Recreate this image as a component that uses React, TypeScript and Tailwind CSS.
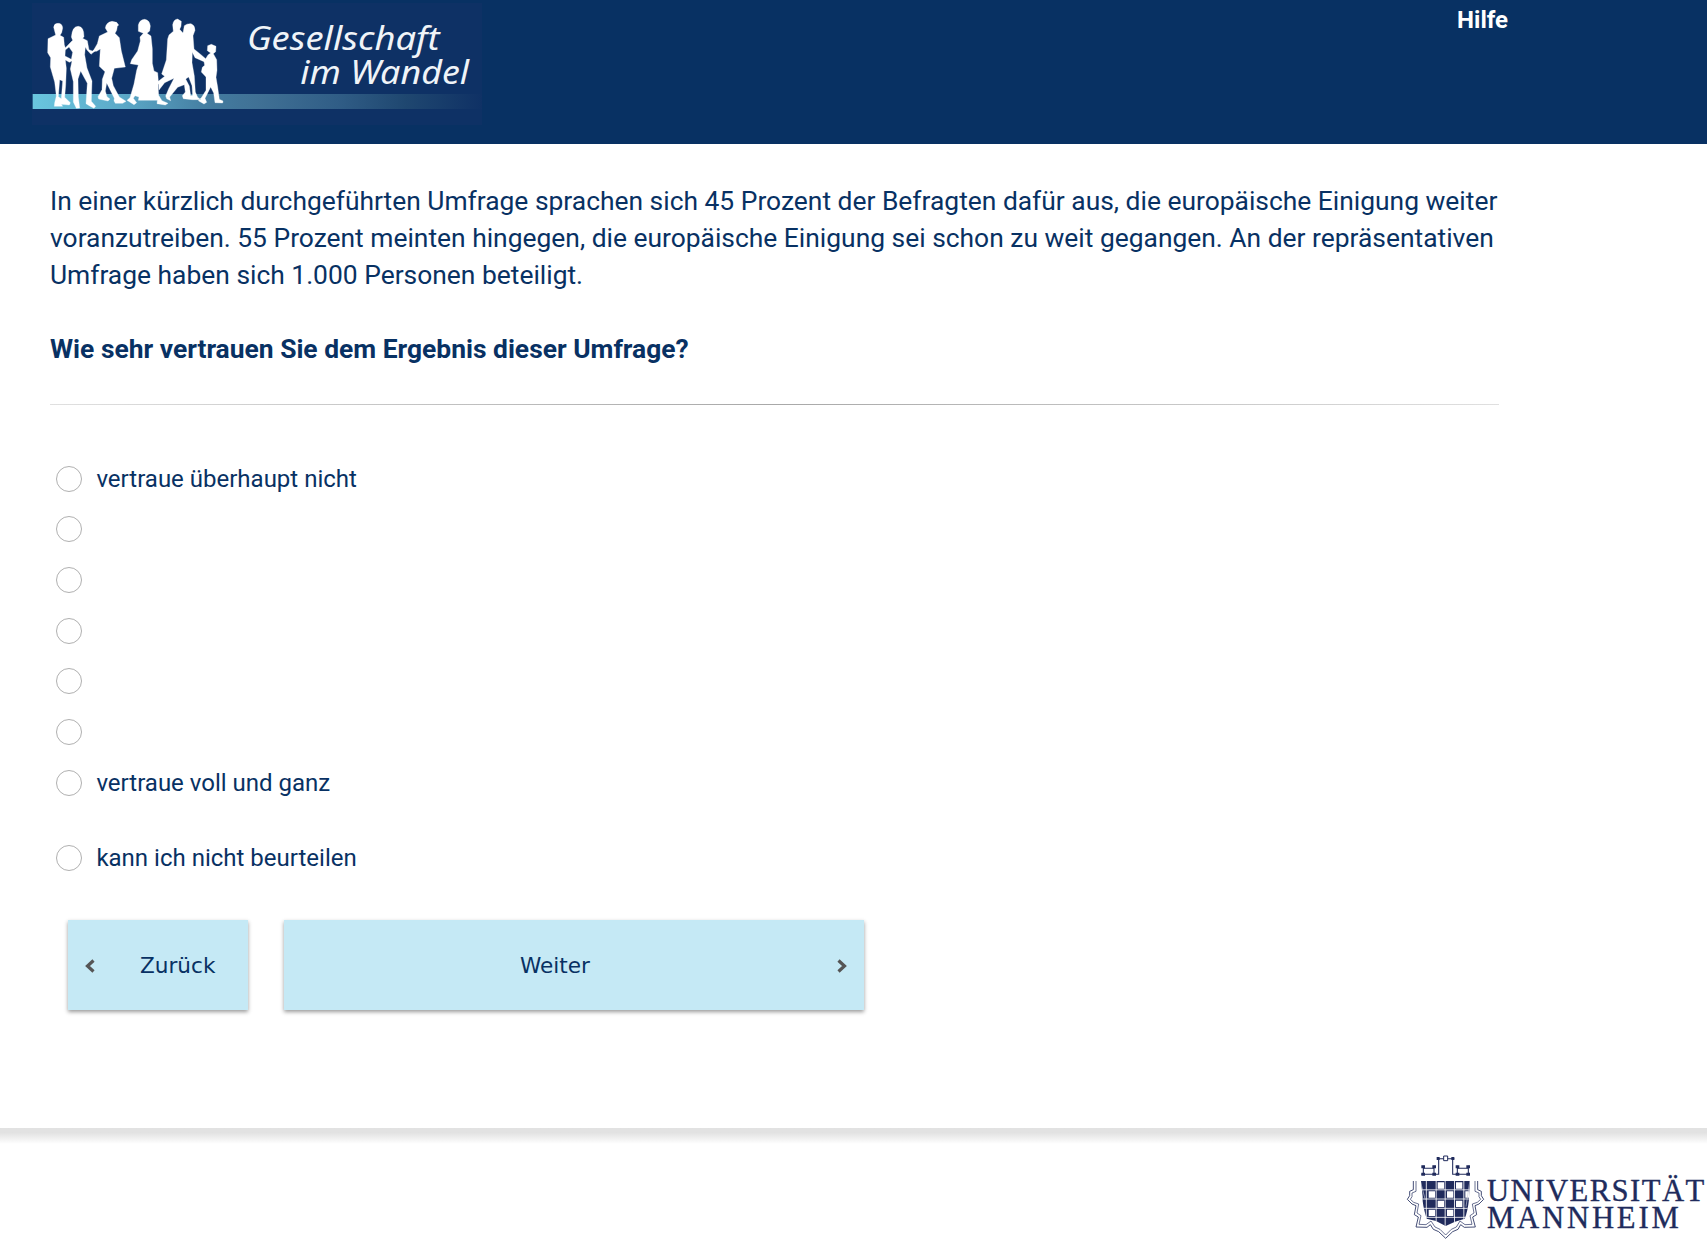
import React from "react";

const options = [
  "vertraue überhaupt nicht",
  "",
  "",
  "",
  "",
  "",
  "vertraue voll und ganz",
];

function SurveyLogo() {
  return (
    <svg
      className="block h-[122px] w-[450px] shrink-0"
      viewBox="36 9 1350 366"
      role="img"
      aria-label="Gesellschaft im Wandel"
    >
      <defs>
        <linearGradient id="band" x1="0" x2="1" y1="0" y2="0">
          <stop offset="0" stopColor="#69c6df" />
          <stop offset="0.2" stopColor="#5ca9c8" />
          <stop offset="0.4" stopColor="#437b9f" />
          <stop offset="0.5" stopColor="#407195" />
          <stop offset="0.68" stopColor="#305d86" />
          <stop offset="0.83" stopColor="#1f4770" />
          <stop offset="1" stopColor="#0f3165" />
        </linearGradient>
      </defs>
      <rect x="36" y="9" width="1350" height="366" fill="#0e3165" />
      <rect x="38" y="282" width="1348" height="45" fill="url(#band)" />
      <g fill="#fff" stroke="#fff" strokeWidth="1" strokeLinejoin="round">
        <path d="M101 82 Q102 70 114 70 Q127 70 128 84 L125 98 L120 106 L131 112 L133 134 L136 143 L147 132 L158 121 L154 111 Q157 78 175 79 Q192 80 192 110 L188 115 L202 122 L207 149 L217 153 L231 145 L228 151 L213 163 L201 150 L196 141 L194 164 L201 204 L216 243 L214 304 L227 319 L222 325 L209 318 L198 311 L202 250 L182 213 L174 237 L175 291 L179 324 L169 325 L160 306 L160 245 L151 207 L156 183 L148 187 L136 180 L139 205 L137 256 L134 292 L151 308 L148 315 L124 313 L128 319 L103 319 L104 308 L109 288 L104 246 L99 229 L91 201 L92 173 L83 158 L84 116 L107 105 Z M147 141 L136 150 L135 168 L154 178 L158 157 Z M119 239 L115 290 L124 296 L128 243 Z" fillRule="evenodd" />
        <path d="M256 84 Q258 67 276 64 L290 67 L296 75 L292 79 L290 91 L285 100 L298 113 L304 153 L316 201 L283 205 L275 235 L280 257 L298 291 L318 304 L308 310 L286 310 L282 303 L283 295 L260 249 L256 273 L261 290 L270 297 L264 303 L236 297 L234 290 L246 269 L247 238 L255 215 L238 199 L241 147 L230 154 L219 154 L232 131 L238 108 L263 96 Z" />
        <path d="M355 75 Q359 59 374 58 Q389 60 391 78 L389 93 L381 100 L393 108 L397 146 L397 190 L402 213 L413 218 L415 243 L424 248 L414 253 L416 286 L426 302 L444 310 L436 315 L411 311 L412 301 L355 301 L357 291 L345 287 L340 295 L350 308 L342 314 L321 301 L330 293 L342 252 L350 211 L355 195 L331 191 L335 179 L353 153 L361 123 L360 111 L370 100 L355 94 Z" />
        <path d="M458 74 Q461 58 473 57 L484 64 L483 79 L479 88 L489 99 L493 77 Q501 70 513 71 Q525 75 525 91 L519 107 L522 147 L543 164 L557 176 L564 165 L572 159 L562 152 L563 137 L574 133 L588 139 L587 155 L580 161 L590 179 L591 211 L588 232 L593 261 L598 298 L609 303 L608 309 L585 308 L581 279 L572 261 L562 281 L555 295 L560 307 L552 312 L535 302 L545 292 L558 271 L558 231 L544 216 L547 202 L554 196 L552 185 L525 173 L517 157 L516 188 L523 228 L526 276 L533 292 L543 299 L517 299 L490 296 L487 287 L496 276 L493 254 L473 262 L454 285 L449 291 L452 302 L440 296 L437 288 L446 266 L462 235 L434 248 L417 270 L415 244 L434 229 L425 222 L439 180 L443 117 L447 105 L460 94 Z M506 231 L497 237 L508 258 L512 287 L518 286 L516 257 Z" fillRule="evenodd" />
      </g>
      <g fill="#f0f4f8" fontFamily="'Noto Sans', sans-serif" fontStyle="italic" fontSize="97">
        <text x="681" y="149" textLength="578" lengthAdjust="spacingAndGlyphs">Gesellschaft</text>
        <text x="841" y="251" textLength="506" lengthAdjust="spacingAndGlyphs">im Wandel</text>
      </g>
    </svg>
  );
}

function UniversityLogo() {
  return (
    <svg
      className="block h-[90px] w-[302px]"
      viewBox="15 96 906 270"
      role="img"
      aria-label="Universität Mannheim"
    >
      <defs>
        <clipPath id="shield">
          <path d="M63 183 H210 Q207 220 207 238 Q203 276 194 296 L165 305 L137 318 L108 303 L80 296 Q66 250 68 230 Z" />
        </clipPath>
      </defs>
      <g clipPath="url(#shield)">
        <rect x="60" y="180" width="155" height="140" fill="#202b5c" />
        <path d="M79 180 V320 M108.500 180 V320 M135.500 180 V320 M163.500 180 V320 M191.500 180 V320 M60 209.500 H215 M60 237 H215 M60 265 H215 M60 292 H215" stroke="#fff" strokeWidth="2.500" />
        <path d="M113 187h19v19h-19z M168 187h19v19h-19z M86 214h19v19h-19z M141 214h19v19h-19z M196 214h19v19h-19z M113 242h19v19h-19z M168 242h19v19h-19z M86 269h19v19h-19z M141 269h19v19h-19z" fill="#fff" />
        <path d="M60 180 L76 240 M210 180 L198 260" stroke="#c9ccda" strokeWidth="2" />
      </g>
      <g fill="none" stroke="#202b5c">
        <path d="M40 183 V209 L29 214 V227 L22 238 L36 252 L48 257 L43 284 L55 291 L48 321 L81 322 L91 314 L100 328 L116 335 L137 355 L158 335 L174 328 L182 314 L193 322 L226 321 L218 291 L230 284 L225 257 L237 252 L251 238 L244 227 V214 L233 209 V183" strokeWidth="2.500" />
        <path d="M48 183 V214 L36 219 V230 L31 238 L41 247 L56 252 L51 279 L63 287 L57 313 L78 314 L93 303 L105 321 L120 328 L137 345 L154 328 L169 321 L180 303 L195 314 L216 313 L210 287 L222 279 L217 252 L232 247 L242 238 L237 230 V219 L225 214 V183" strokeWidth="2" />
        <path d="M70 137 V165 M102 137 V165 M70 145 H102 M64 163 H116 V116 M172 145 H205 M172 137 V165 M205 137 V165 M158 116 V163 H210 M111 116 H163" strokeWidth="3.200" />
        <path d="M131 108 H143 V122 H131 Z" fill="#fff" strokeWidth="3" />
      </g>
      <g fill="#202b5c">
        <path d="M64 136h11v9h-11z M64 158h11v9h-11z M97 136h11v9h-11z M97 158h11v9h-11z M110 111h9v9h-9z M154 111h9v9h-9z M167 136h11v9h-11z M167 158h11v9h-11z M199 136h11v9h-11z M199 158h11v9h-11z" />
      </g>
      <g fill="#202b5c" stroke="#202b5c" strokeWidth="1" fontFamily="'Liberation Serif', serif" fontSize="92">
        <text x="261" y="242" textLength="652">UNIVERSITÄT</text>
        <text x="261" y="323" textLength="575">MANNHEIM</text>
      </g>
    </svg>
  );
}

function Option({ label }: { label: string }) {
  return (
    <label className="flex h-[50.7px] items-center text-[24px] leading-none">
      <input
        type="radio"
        name="trust"
        className="mr-[14.400px] h-[26px] w-[26px] shrink-0 appearance-none rounded-full border border-[#b0b0b0] bg-white"
      />
      <span>{label}</span>
    </label>
  );
}

export default function App() {
  return (
    <div className="flex h-[1249px] flex-col overflow-hidden bg-white font-['Roboto',sans-serif] text-[#083163]">
      <header className="flex h-[144px] shrink-0 items-start justify-between bg-[#083163] pt-[3px] pr-[199px] pl-8">
        <SurveyLogo />
        <a href="#" className="pt-[3px] text-[24px] leading-[28px] font-bold text-white">
          Hilfe
        </a>
      </header>

      <main className="flex h-[984px] shrink-0 flex-col pt-[39px] pl-[50px]">
        <section className="w-[1449px] text-[26.400px] leading-[37px]">
          <p className="whitespace-nowrap">
            In einer kürzlich durchgeführten Umfrage sprachen sich 45 Prozent der Befragten dafür aus, die europäische Einigung weiter
            <br />
            voranzutreiben. 55 Prozent meinten hingegen, die europäische Einigung sei schon zu weit gegangen. An der repräsentativen
            <br />
            Umfrage haben sich 1.000 Personen beteiligt.
          </p>
          <h1 className="mt-[37px] font-bold">Wie sehr vertrauen Sie dem Ergebnis dieser Umfrage?</h1>
        </section>
        <div className="mt-[36px] h-px w-[1449px] shrink-0 bg-linear-to-r from-[#e0e0e0] via-[#a8a8a8] to-[#e0e0e0]" />

        <div className="mt-[48.400px] pl-[6px]">
          {options.map((label, i) => (
            <Option key={i} label={label} />
          ))}
          <div className="mt-6">
            <Option label="kann ich nicht beurteilen" />
          </div>
        </div>

        <div className="mt-[37.500px] flex gap-9 pl-[18px] font-['DejaVu_Sans',sans-serif] text-[21.600px]">
          <button className="flex h-[90px] w-[180px] items-center bg-[#c5e9f5] pl-[17px] shadow-[0_2px_4px_rgba(0,0,0,0.400)]">
            <svg className="mt-[2px] h-[14px] w-[10px]" viewBox="0 0 10 14" fill="none" stroke="#555" strokeWidth="3.200">
              <path d="M8.500 1.500 L2.500 7 L8.500 12.500" />
            </svg>
            <span className="ml-[45px] pt-[2px]">Zurück</span>
          </button>
          <button className="flex h-[90px] w-[580px] items-center justify-between bg-[#c5e9f5] pr-[17px] pl-[236px] shadow-[0_2px_4px_rgba(0,0,0,0.400)]">
            <span className="pt-[2px]">Weiter</span>
            <svg className="mt-[2px] h-[14px] w-[10px]" viewBox="0 0 10 14" fill="none" stroke="#555" strokeWidth="3.200">
              <path d="M1.500 1.500 L7.500 7 L1.500 12.500" />
            </svg>
          </button>
        </div>
      </main>

      <footer className="flex flex-1 flex-col">
        <div className="h-4 shrink-0 bg-linear-to-b from-[#e2e2e2] from-30% to-white" />
        <div className="flex justify-end pt-2">
          <UniversityLogo />
        </div>
      </footer>
    </div>
  );
}
